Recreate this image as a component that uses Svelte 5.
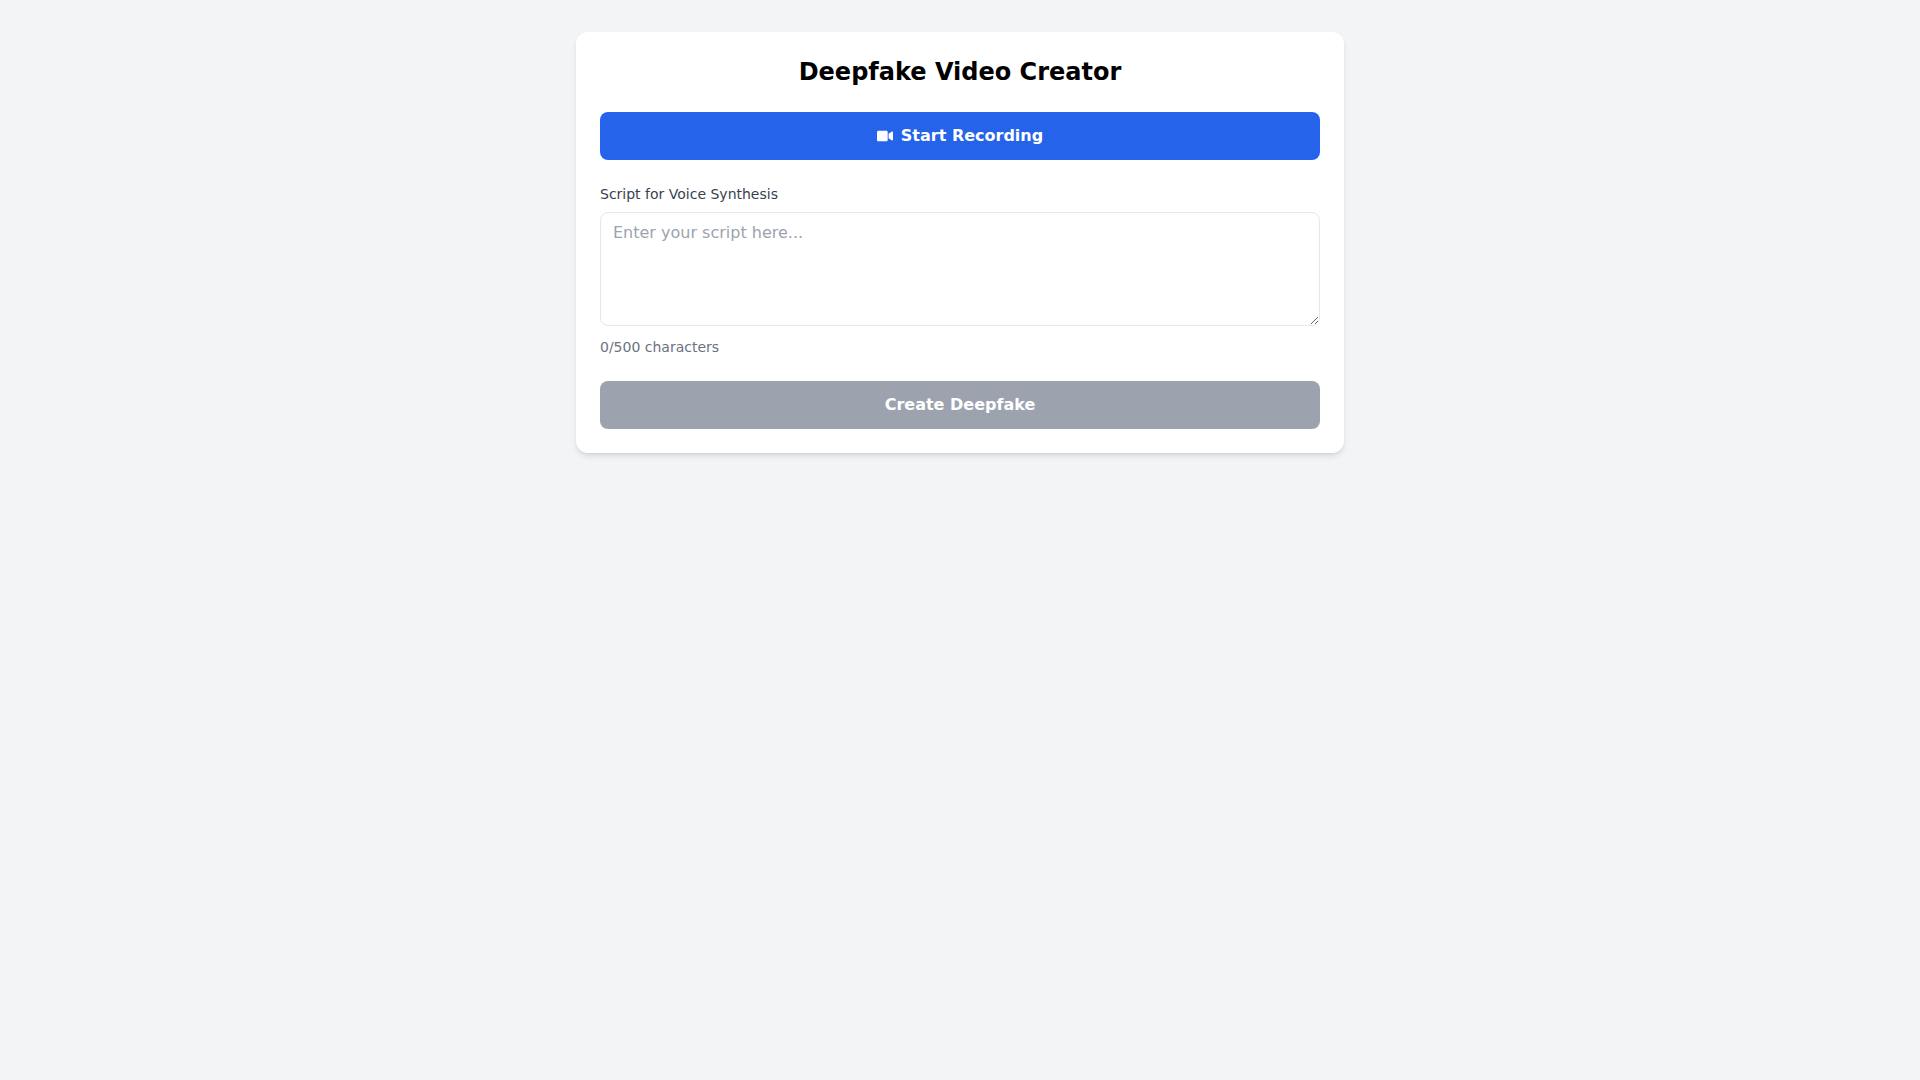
<script>
  const MAX_CHARS = 500;

  let script = $state('');
  let recording = $state(false);
  let recorded = $state(false);

  let canCreate = $derived(recorded && !recording && script.trim().length > 0);

  function toggleRecording() {
    if (recording) recorded = true;
    recording = !recording;
  }
</script>

<svelte:head>
  <title>Deepfake Video Creator</title>
</svelte:head>

<main class="page">
  <div class="card">
    <h1>Deepfake Video Creator</h1>

    <button type="button" class="btn record" class:recording onclick={toggleRecording}>
      <svg class="icon" viewBox="0 0 576 512" fill="currentColor" aria-hidden="true">
        <path d="M336.2 64H47.8C21.4 64 0 85.4 0 111.8v288.4C0 426.6 21.4 448 47.8 448h288.4c26.4 0 47.8-21.4 47.8-47.8V111.8c0-26.4-21.4-47.8-47.8-47.8zm189.4 37.7L416 177.3v157.4l109.6 75.5c21.2 14.6 50.4-.3 50.4-25.8V127.5c0-25.4-29.1-40.4-50.4-25.8z" />
      </svg>
      {recording ? 'Stop Recording' : 'Start Recording'}
    </button>

    <div class="field">
      <label for="script">Script for Voice Synthesis</label>
      <textarea
        id="script"
        rows="4"
        maxlength={MAX_CHARS}
        placeholder="Enter your script here..."
        bind:value={script}
      ></textarea>
      <p class="counter">{script.length}/{MAX_CHARS} characters</p>
    </div>

    <button type="button" class="btn create" disabled={!canCreate}>Create Deepfake</button>
  </div>
</main>

<style>
  :global(body) {
    margin: 0;
    background: #f3f4f6;
  }

  .page {
    box-sizing: border-box;
    min-height: 100vh;
    padding: 32px;
    font-family: 'DejaVu Sans', sans-serif;
    font-size: 16px;
    line-height: 24px;
    color: #000;
  }

  .card {
    box-sizing: border-box;
    max-width: 768px;
    margin: 0 auto;
    padding: 24px;
    background: #fff;
    border-radius: 12px;
    box-shadow:
      0 4px 6px -1px rgb(0 0 0 / 0.1),
      0 2px 4px -2px rgb(0 0 0 / 0.1);
  }

  h1 {
    margin: 0 0 24px;
    font-size: 24px;
    line-height: 32px;
    font-weight: 700;
    text-align: center;
  }

  .btn {
    display: flex;
    align-items: center;
    justify-content: center;
    gap: 8px;
    width: 100%;
    padding: 12px 16px;
    border: 0;
    border-radius: 8px;
    font: inherit;
    font-weight: 600;
    color: #fff;
    cursor: pointer;
  }

  .record {
    background: #2563eb;
  }

  .record:hover {
    background: #1d4ed8;
  }

  .record.recording {
    background: #dc2626;
  }

  .create {
    background: #16a34a;
  }

  .create:disabled {
    background: #9ca3af;
    cursor: not-allowed;
  }

  .icon {
    width: 16px;
    height: 16px;
  }

  .field {
    margin: 24px 0;
  }

  label {
    display: block;
    margin-bottom: 8px;
    font-size: 14px;
    line-height: 20px;
    font-weight: 500;
    color: #374151;
  }

  textarea {
    box-sizing: border-box;
    width: 100%;
    padding: 8px 12px;
    border: 1px solid #e5e7eb;
    border-radius: 8px;
    font: inherit;
    color: inherit;
    background: #fff;
    resize: vertical;
  }

  textarea::placeholder {
    color: #9ca3af;
  }

  .counter {
    margin: 4px 0 0;
    font-size: 14px;
    line-height: 20px;
    color: #6b7280;
  }
</style>
